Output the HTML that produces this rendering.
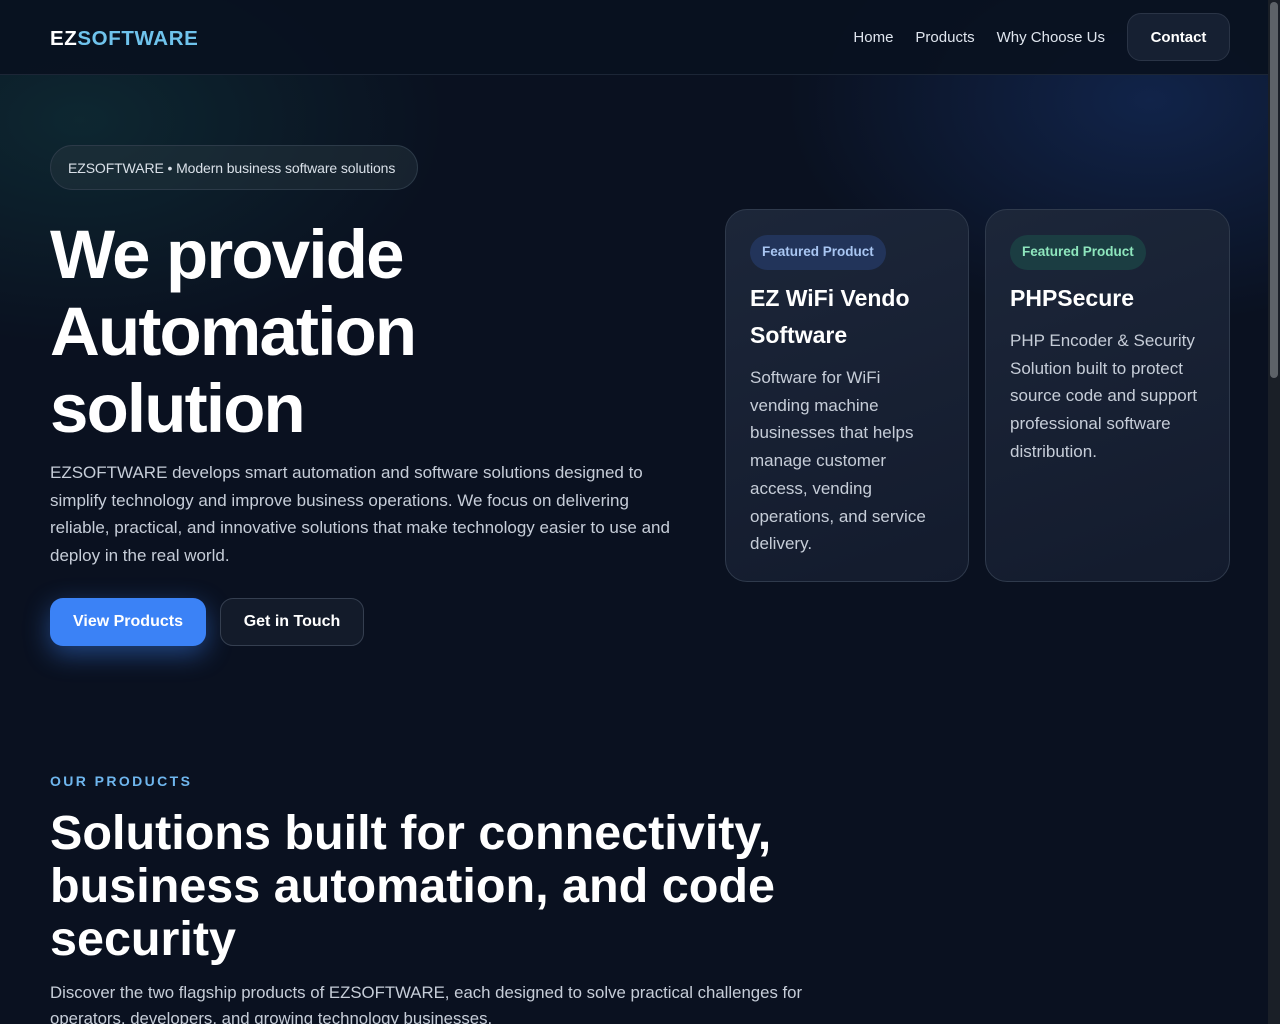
<!DOCTYPE html>
<html><head><meta charset="utf-8"><style>
*{box-sizing:border-box;margin:0;padding:0}
html,body{width:1280px;height:1024px;overflow:hidden}
body{font-family:"Liberation Sans",sans-serif;color:#fff;background:#0a1120;position:relative}
.bg{position:absolute;left:0;top:0;width:1268px;height:1024px;
background:radial-gradient(ellipse 520px 320px at 80px 120px,rgba(20,80,80,.35),transparent 70%),
radial-gradient(ellipse 520px 320px at 1150px 100px,rgba(30,70,150,.35),transparent 70%),#0a1120}
header{position:absolute;left:0;top:0;width:1268px;height:75px;background:rgba(9,17,32,.92);border-bottom:1px solid #1c2636}
.logo{position:absolute;left:50px;top:27px;font-size:20.5px;font-weight:bold;letter-spacing:0.6px}
.logo span{color:#6fc3ec}
nav{position:absolute;right:38px;top:13px;display:flex;align-items:center;font-size:15px;color:#dfe5ee}
nav a{margin-right:22px}
.contact{width:103px;height:48px;border:1px solid #2a3446;border-radius:14px;background:#162032;display:flex;align-items:center;justify-content:center;font-weight:bold;color:#fff}
.pill{position:absolute;left:50px;top:145px;width:368px;height:45px;border:1px solid #2c3a48;border-radius:23px;background:rgba(40,55,65,.45);font-size:14px;color:#d9e0e8;padding:14px 0 0 17px;letter-spacing:-0.1px}
h1{position:absolute;left:50px;top:216px;font-size:69px;line-height:77px;font-weight:bold;letter-spacing:-1.8px}
.lead{position:absolute;left:50px;top:459px;width:640px;font-size:17px;line-height:27.7px;color:#c6cdd8}
.btn1{position:absolute;left:50px;top:598px;width:156px;height:48px;border-radius:13px;background:#3b82f6;box-shadow:0 8px 26px rgba(59,130,246,.45);font-weight:bold;font-size:16px;display:flex;align-items:center;justify-content:center}
.btn2{position:absolute;left:220px;top:598px;width:144px;height:48px;border-radius:13px;border:1px solid #353f50;background:#131b2a;font-weight:bold;font-size:16px;display:flex;align-items:center;justify-content:center}
.card{position:absolute;top:209px;height:373px;border:1px solid #2f3a4c;border-radius:22px;background:linear-gradient(160deg,#1c2639,#131b2d);padding:25px 24px}
.tag{display:inline-block;height:35px;border-radius:18px;font-size:13.5px;font-weight:bold;padding:9px 12px 0}
.card h3{font-size:23px;line-height:37px;margin-top:10px}
.card p{font-size:17px;line-height:27.7px;color:#c6cdd8;margin-top:10px}
.eyebrow{position:absolute;left:50px;top:773px;font-size:14px;font-weight:bold;letter-spacing:2.4px;color:#6fb6ee}
h2{position:absolute;left:50px;top:807px;font-size:48.5px;line-height:53px;font-weight:bold;width:800px;letter-spacing:0}
.sub{position:absolute;left:50px;top:980px;width:780px;font-size:16.8px;line-height:26px;color:#c6cdd8}
.sb{position:absolute;right:0;top:0;width:12px;height:1024px;background:#1a1f27}
.sb div{position:absolute;left:2px;top:2px;width:8px;height:376px;border-radius:4px;background:#5d6268}
</style></head><body>
<div class="bg"></div>
<header><div class="logo">EZ<span>SOFTWARE</span></div>
<nav><a>Home</a><a>Products</a><a>Why Choose Us</a><div class="contact">Contact</div></nav></header>
<div class="pill">EZSOFTWARE • Modern business software solutions</div>
<h1>We provide<br>Automation<br>solution</h1>
<div class="lead">EZSOFTWARE develops smart automation and software solutions designed to simplify technology and improve business operations. We focus on delivering reliable, practical, and innovative solutions that make technology easier to use and deploy in the real world.</div>
<div class="btn1">View Products</div><div class="btn2">Get in Touch</div>
<div class="card" style="left:725px;width:244px"><span class="tag" style="background:#22345a;color:#a9c6f2">Featured Product</span><h3>EZ WiFi Vendo Software</h3><p>Software for WiFi vending machine businesses that helps manage customer access, vending operations, and service delivery.</p></div>
<div class="card" style="left:985px;width:245px"><span class="tag" style="background:#1b3d42;color:#8ee6bd">Featured Product</span><h3>PHPSecure</h3><p>PHP Encoder &amp; Security Solution built to protect source code and support professional software distribution.</p></div>
<div class="eyebrow">OUR PRODUCTS</div>
<h2>Solutions built for connectivity, business automation, and code security</h2>
<div class="sub">Discover the two flagship products of EZSOFTWARE, each designed to solve practical challenges for operators, developers, and growing technology businesses.</div>
<div class="sb"><div></div></div>
</body></html>
